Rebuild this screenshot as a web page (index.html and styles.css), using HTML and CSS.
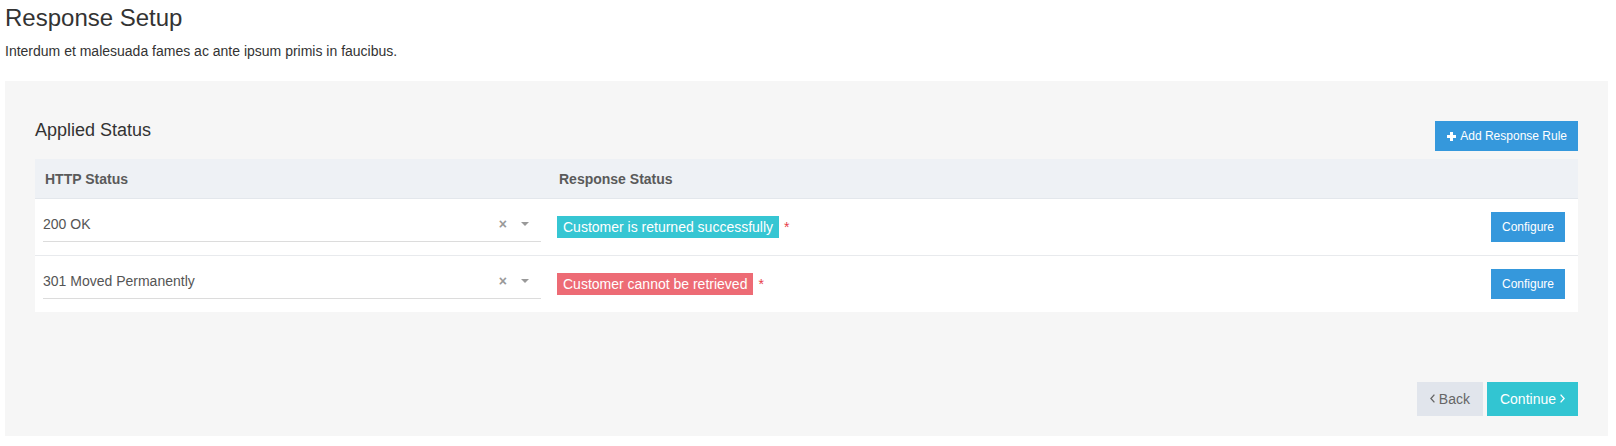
FILE: index.html
```html
<!DOCTYPE html>
<html lang="en">
<head>
<meta charset="utf-8">
<title>Response Setup</title>
<link rel="stylesheet" href="styles.css">
</head>
<body>
  <div class="page">
    <h1 class="page-title">Response Setup</h1>
    <p class="page-desc">Interdum et malesuada fames ac ante ipsum primis in faucibus.</p>

    <section class="panel">
      <div class="panel-head">
        <h3 class="panel-title">Applied Status</h3>
        <button class="btn btn-blue btn-add">
          <svg class="ico-plus" width="9" height="9" viewBox="0 0 9 9" aria-hidden="true"><rect x="3" y="0" width="3" height="9" fill="#fff"/><rect x="0" y="3" width="9" height="3" fill="#fff"/></svg>
          <span>Add Response Rule</span>
        </button>
      </div>

      <table class="rules">
        <colgroup>
          <col class="c-http">
          <col class="c-resp">
          <col class="c-act">
        </colgroup>
        <thead>
          <tr>
            <th>HTTP Status</th>
            <th>Response Status</th>
            <th></th>
          </tr>
        </thead>
        <tbody>
          <tr>
            <td>
              <div class="select">
                <span class="select-value">200 OK</span>
                <span class="select-clear">×</span>
                <span class="select-caret"></span>
              </div>
            </td>
            <td>
              <div class="status">
                <span class="label label-success">Customer is returned successfully</span>
                <span class="req">*</span>
              </div>
            </td>
            <td class="act"><button class="btn btn-blue btn-sm">Configure</button></td>
          </tr>
          <tr>
            <td>
              <div class="select">
                <span class="select-value">301 Moved Permanently</span>
                <span class="select-clear">×</span>
                <span class="select-caret"></span>
              </div>
            </td>
            <td>
              <div class="status">
                <span class="label label-danger">Customer cannot be retrieved</span>
                <span class="req">*</span>
              </div>
            </td>
            <td class="act"><button class="btn btn-blue btn-sm">Configure</button></td>
          </tr>
        </tbody>
      </table>

      <div class="panel-foot">
        <button class="btn btn-default btn-nav">
          <svg class="chev" width="5" height="9" viewBox="0 0 5 9" aria-hidden="true"><polyline points="4.4,0.6 0.9,4.5 4.4,8.4" fill="none" stroke="currentColor" stroke-width="1.3"/></svg>
          <span>Back</span>
        </button>
        <button class="btn btn-green btn-nav">
          <span>Continue</span>
          <svg class="chev" width="5" height="9" viewBox="0 0 5 9" aria-hidden="true"><polyline points="0.6,0.6 4.1,4.5 0.6,8.4" fill="none" stroke="currentColor" stroke-width="1.3"/></svg>
        </button>
      </div>
    </section>
  </div>
</body>
</html>
```

FILE: styles.css
```css
* { box-sizing: border-box; }

html, body {
  margin: 0;
  padding: 0;
  background: #fff;
}

body {
  font-family: "Liberation Sans", Arial, sans-serif;
  font-size: 14px;
  line-height: 20px;
  color: #333;
}

.page {
  padding: 5px 8px 10px 5px;
}

.page-title {
  margin: 0;
  font-size: 24px;
  line-height: 26.4px;
  font-weight: 400;
  color: #333;
}

.page-desc {
  margin: 10px 0 0;
  font-size: 14px;
  line-height: 20px;
  color: #333;
}

.panel {
  margin-top: 20px;
  background: #f6f6f6;
  padding: 39px 30px 20px;
}

.panel-head {
  display: flex;
  justify-content: space-between;
  align-items: flex-start;
}

.panel-title {
  margin: 0;
  font-size: 18px;
  line-height: 20px;
  font-weight: 400;
  color: #333;
}

.btn {
  border: 0;
  margin: 0;
  font-family: "Liberation Sans", Arial, sans-serif;
  cursor: pointer;
  display: inline-flex;
  align-items: center;
  border-radius: 0;
}

.btn-blue {
  background: #3598dc;
  color: #fff;
}

.btn-add {
  margin-top: 1px;
  height: 30px;
  padding: 0 11px 0 12px;
  font-size: 12px;
  gap: 4px;
}

.ico-plus { display: block; }

.btn-sm {
  height: 30px;
  padding: 0 11px;
  font-size: 12px;
}

.rules {
  width: 100%;
  margin-top: 8px;
  border-collapse: collapse;
  table-layout: fixed;
  background: #fff;
}

.c-http { width: 514px; }
.c-act { width: 110px; }

.rules th {
  background: #eef1f5;
  height: 39px;
  padding: 0 10px;
  text-align: left;
  font-size: 14px;
  font-weight: 700;
  color: #5a5a5a;
  border-bottom: 1px solid #e3e7ec;
}

.rules td {
  padding: 8px;
  vertical-align: middle;
  border-bottom: 1px solid #e8eaed;
}

.rules tbody tr:last-child td {
  border-bottom: 0;
}

.rules td.act {
  text-align: right;
  padding-right: 13px;
}

.select {
  display: flex;
  align-items: center;
  height: 35px;
  margin-bottom: 5px;
  border-bottom: 1px solid #dcdcdc;
  color: #555;
  font-size: 14px;
}

.select-value {
  flex: 1;
}

.select-clear {
  font-weight: 700;
  color: #999;
  font-size: 14px;
  line-height: 20px;
}

.select-caret {
  width: 0;
  height: 0;
  margin-left: 14px;
  margin-right: 12px;
  border-left: 4px solid transparent;
  border-right: 4px solid transparent;
  border-top: 4px solid #999;
}

.status {
  display: flex;
  align-items: baseline;
}

.label {
  display: inline-block;
  padding: 0 6px;
  line-height: 22px;
  font-size: 14px;
  color: #fff;
}

.label-success { background: #36c6d3; }
.label-danger { background: #ed6b75; }

.req {
  margin-left: 5px;
  color: #e73d4a;
  font-size: 14px;
  line-height: 22px;
}

.panel-foot {
  margin-top: 70px;
  display: flex;
  justify-content: flex-end;
  gap: 4px;
}

.btn-nav {
  height: 34px;
  padding: 0 13px;
  font-size: 14px;
  gap: 4px;
}

.chev { display: block; }

.btn-default {
  background: #e1e5ec;
  color: #666;
}

.btn-green {
  background: #32c5d2;
  color: #fff;
}
```
